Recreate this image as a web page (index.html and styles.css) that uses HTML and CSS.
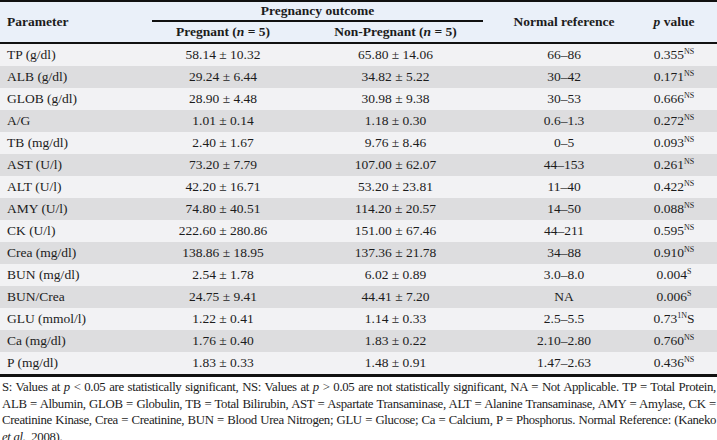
FILE: index.html
```html
<!DOCTYPE html>
<html>
<head>
<meta charset="utf-8">
<link rel="stylesheet" href="styles.css">
</head>
<body>
<table class="data">
  <colgroup>
    <col class="c1"><col class="c2"><col class="c3"><col class="c4"><col class="c5">
  </colgroup>
  <thead>
    <tr class="h1">
      <th rowspan="2" class="left">Parameter</th>
      <th colspan="2" class="group"><div class="group-inner">Pregnancy outcome</div></th>
      <th rowspan="2">Normal reference</th>
      <th rowspan="2"><i>p</i> value</th>
    </tr>
    <tr class="h2">
      <th>Pregnant (<i>n</i> = 5)</th>
      <th>Non-Pregnant (<i>n</i> = 5)</th>
    </tr>
  </thead>
  <tbody>
    <tr class="l"><td class="left">TP (g/dl)</td><td>58.14 ± 10.32</td><td>65.80 ± 14.06</td><td>66–86</td><td>0.355<sup>NS</sup></td></tr>
    <tr class="d"><td class="left">ALB (g/dl)</td><td>29.24 ± 6.44</td><td>34.82 ± 5.22</td><td>30–42</td><td>0.171<sup>NS</sup></td></tr>
    <tr class="l"><td class="left">GLOB (g/dl)</td><td>28.90 ± 4.48</td><td>30.98 ± 9.38</td><td>30–53</td><td>0.666<sup>NS</sup></td></tr>
    <tr class="d"><td class="left">A/G</td><td>1.01 ± 0.14</td><td>1.18 ± 0.30</td><td>0.6–1.3</td><td>0.272<sup>NS</sup></td></tr>
    <tr class="l"><td class="left">TB (mg/dl)</td><td>2.40 ± 1.67</td><td>9.76 ± 8.46</td><td>0–5</td><td>0.093<sup>NS</sup></td></tr>
    <tr class="d"><td class="left">AST (U/l)</td><td>73.20 ± 7.79</td><td>107.00 ± 62.07</td><td>44–153</td><td>0.261<sup>NS</sup></td></tr>
    <tr class="l"><td class="left">ALT (U/l)</td><td>42.20 ± 16.71</td><td>53.20 ± 23.81</td><td>11–40</td><td>0.422<sup>NS</sup></td></tr>
    <tr class="d"><td class="left">AMY (U/l)</td><td>74.80 ± 40.51</td><td>114.20 ± 20.57</td><td>14–50</td><td>0.088<sup>NS</sup></td></tr>
    <tr class="l"><td class="left">CK (U/l)</td><td>222.60 ± 280.86</td><td>151.00 ± 67.46</td><td>44–211</td><td>0.595<sup>NS</sup></td></tr>
    <tr class="d"><td class="left">Crea (mg/dl)</td><td>138.86 ± 18.95</td><td>137.36 ± 21.78</td><td>34–88</td><td>0.910<sup>NS</sup></td></tr>
    <tr class="l"><td class="left">BUN (mg/dl)</td><td>2.54 ± 1.78</td><td>6.02 ± 0.89</td><td>3.0–8.0</td><td>0.004<sup>S</sup></td></tr>
    <tr class="d"><td class="left">BUN/Crea</td><td>24.75 ± 9.41</td><td>44.41 ± 7.20</td><td>NA</td><td>0.006<sup>S</sup></td></tr>
    <tr class="l"><td class="left">GLU (mmol/l)</td><td>1.22 ± 0.41</td><td>1.14 ± 0.33</td><td>2.5–5.5</td><td>0.73<sup>1N</sup>S</td></tr>
    <tr class="d"><td class="left">Ca (mg/dl)</td><td>1.76 ± 0.40</td><td>1.83 ± 0.22</td><td>2.10–2.80</td><td>0.760<sup>NS</sup></td></tr>
    <tr class="l"><td class="left">P (mg/dl)</td><td>1.83 ± 0.33</td><td>1.48 ± 0.91</td><td>1.47–2.63</td><td>0.436<sup>NS</sup></td></tr>
  </tbody>
</table>
<p class="note">S: Values at <i>p</i> &lt; 0.05 are statistically significant, NS: Values at <i>p</i> &gt; 0.05 are not statistically significant, NA = Not Applicable. TP = Total Protein, ALB = Albumin, GLOB = Globulin, TB = Total Bilirubin, AST = Aspartate Transaminase, ALT = Alanine Transaminase, AMY = Amylase, CK = Creatinine Kinase, Crea = Creatinine, BUN = Blood Urea Nitrogen; GLU = Glucose; Ca = Calcium, P = Phosphorus. Normal Reference: (Kaneko <i>et al.</i>, 2008).</p>
</body>
</html>
```

FILE: styles.css
```css
html, body {
  margin: 0;
  padding: 0;
  background: #ffffff;
}
body {
  width: 717px;
  overflow: hidden;
  font-family: "Liberation Serif", "Times New Roman", serif;
  color: #1c1c1c;
}
.data {
  width: 717px;
  border-collapse: collapse;
  table-layout: fixed;
  font-size: 13.5px;
  border-top: 2px solid #111;
  border-bottom: 3px solid #111;
}
.c1 { width: 152px; }
.c2 { width: 142px; }
.c3 { width: 203px; }
.c4 { width: 134px; }
.c5 { width: 86px; }
thead {
  background: #eaf0f9;
  border-bottom: 2px solid #111;
}
th {
  font-weight: bold;
  text-align: center;
  padding: 0;
  line-height: 16px;
}
.h1 { height: 19px; }
.h2 { height: 21px; }
th.group {
  vertical-align: top;
  padding: 0;
}
.group-inner {
  margin-right: 14px;
  border-bottom: 2px solid #111;
  height: 18px;
  line-height: 18px;
}
.h2 th { vertical-align: middle; }
th.left, td.left {
  text-align: left;
  padding-left: 7px;
}
tbody tr { height: 22px; }
td {
  text-align: center;
  padding: 0;
  height: 22px;
  line-height: 16px;
  white-space: nowrap;
}
tr.l { background: #f2f2f4; }
tr.d { background: #dddddf; }
sup {
  font-size: 8px;
  line-height: 0;
  vertical-align: 5px;
}
.note {
  margin: 2px 1px 0 2px;
  font-size: 12.8px;
  letter-spacing: -0.34px;
  line-height: 16.5px;
  text-align: justify;
  color: #1c1c1c;
}
```
